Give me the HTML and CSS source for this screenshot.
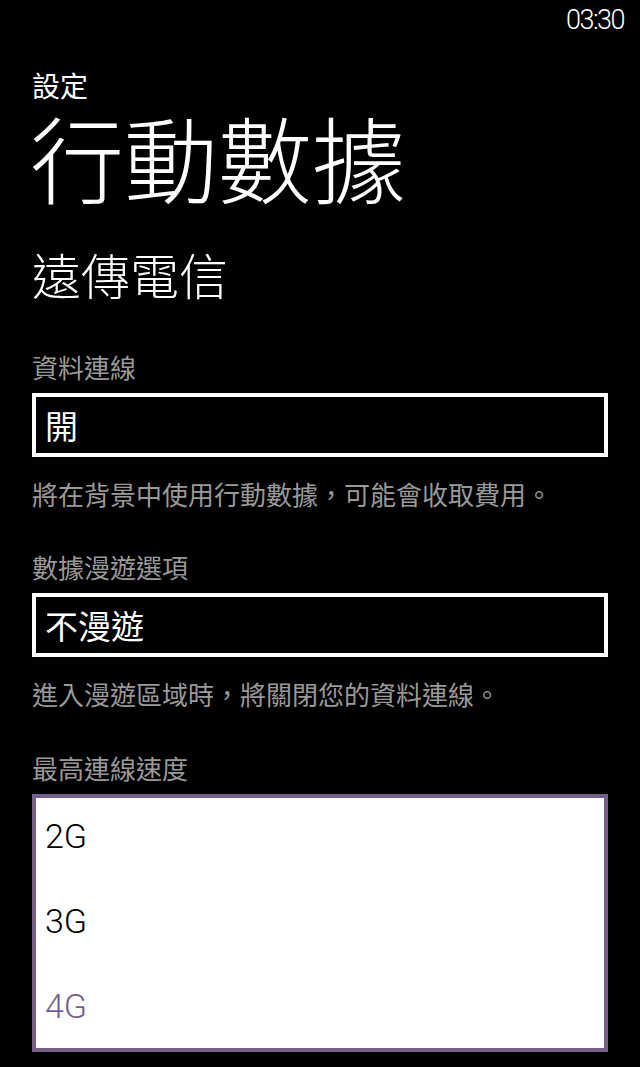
FILE: index.html
```html
<!DOCTYPE html>
<html lang="zh-Hant">
<head>
<meta charset="utf-8">
<title>行動數據</title>
<link rel="stylesheet" href="styles.css">
</head>
<body>
<div class="phone">
  <div class="status-bar"><span class="time">03:30</span></div>
  <div class="content">
    <div class="app-title">設定</div>
    <h1 class="page-title">行動數據</h1>
    <h2 class="carrier">遠傳電信</h2>

    <section class="setting first">
      <div class="label">資料連線</div>
      <div class="picker"><span class="picker-value">開</span></div>
      <p class="desc">將在背景中使用行動數據，可能會收取費用。</p>
    </section>

    <section class="setting">
      <div class="label">數據漫遊選項</div>
      <div class="picker"><span class="picker-value">不漫遊</span></div>
      <p class="desc">進入漫遊區域時，將關閉您的資料連線。</p>
    </section>

    <section class="setting last">
      <div class="label">最高連線速度</div>
      <div class="picker-open">
        <div class="option">2G</div>
        <div class="option">3G</div>
        <div class="option selected">4G</div>
      </div>
    </section>
  </div>
</div>
</body>
</html>
```

FILE: styles.css
```css
html, body {
  margin: 0;
  padding: 0;
  background: #000;
}

body {
  color: #fff;
  font-family: "Noto Sans CJK TC", "Noto Sans", sans-serif;
  width: 640px;
  height: 1067px;
  overflow: hidden;
}

.phone {
  display: flex;
  flex-direction: column;
}

.status-bar {
  height: 40px;
  display: flex;
  justify-content: flex-end;
  align-items: center;
  padding-right: 16px;
}

.time {
  font-family: "Roboto", "Open Sans", sans-serif;
  font-weight: 300;
  font-size: 27px;
  line-height: 40px;
  letter-spacing: -1.5px;
  color: #fff;
}

.content {
  padding: 0 32px;
  display: flex;
  flex-direction: column;
}

.app-title {
  margin-top: 25px;
  font-size: 28px;
  line-height: 40px;
  height: 40px;
}

.page-title {
  margin: 1px 0 0 -2px;
  font-size: 94px;
  font-weight: 300;
  line-height: 100px;
  height: 100px;
  white-space: nowrap;
}

.carrier {
  margin: 40px 0 0 0;
  font-size: 49px;
  font-weight: 300;
  line-height: 56px;
  height: 56px;
}

.setting {
  display: flex;
  flex-direction: column;
  margin-top: 39px;
}

.setting.first {
  margin-top: 48px;
}

.setting.last {
  margin-top: 40px;
}

.label {
  font-size: 26px;
  line-height: 34px;
  height: 34px;
  color: #999;
  margin-bottom: 9px;
}

.picker {
  box-sizing: border-box;
  height: 64px;
  border: 4px solid #fff;
  padding-left: 9px;
  display: flex;
  align-items: flex-start;
}

.picker-value {
  font-size: 33px;
  line-height: 56px;
  color: #fff;
}

.desc {
  margin: 20px 0 0 0;
  font-size: 26px;
  line-height: 34px;
  color: #999;
  white-space: nowrap;
}

.picker-open {
  box-sizing: border-box;
  height: 258px;
  border: 4px solid #76608a;
  background: #fff;
  overflow: hidden;
  display: flex;
  flex-direction: column;
}

.option {
  flex: none;
  height: 85px;
  line-height: 77px;
  padding-left: 9px;
  font-family: "Roboto", "Open Sans", sans-serif;
  font-weight: 300;
  font-size: 34px;
  color: #000;
}

.option.selected {
  color: #76608a;
}
```
